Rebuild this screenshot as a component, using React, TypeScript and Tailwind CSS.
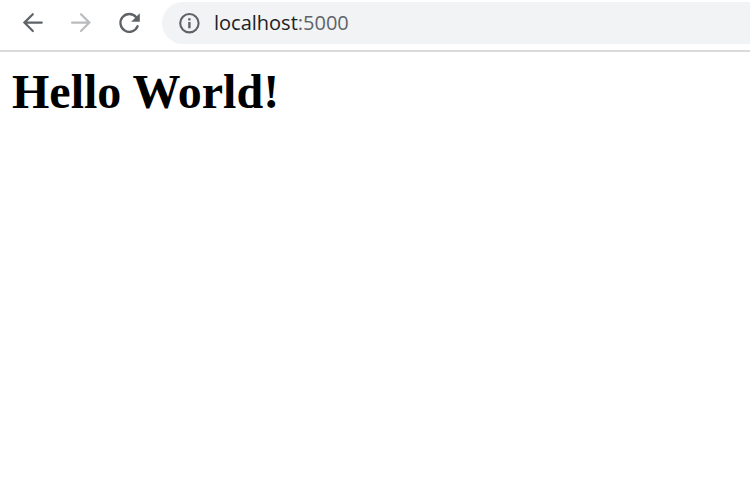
import React from "react";

const iconButton = "flex size-8 items-center justify-center rounded-full";

function BrowserToolbar() {
  return (
    <header className="flex h-[52px] items-start border-b-2 border-[#dadada] bg-white pl-4 pt-[2px]">
      <nav aria-label="Browser controls" className="flex h-[42px] shrink-0 items-center gap-4">
        <button type="button" aria-label="Back" className={iconButton}>
          <svg viewBox="0 0 32 32" className="size-8 fill-none stroke-[#5f6368]" strokeWidth="2.2" strokeLinecap="round" aria-hidden="true">
            <path d="M25.8 15.6H8.4M16.8 7.2L8.4 15.6l8.4 8.4" />
          </svg>
        </button>
        <button type="button" aria-label="Forward" disabled className={iconButton}>
          <svg viewBox="0 0 32 32" className="size-8 fill-none stroke-[#babcbe]" strokeWidth="2.2" strokeLinecap="round" aria-hidden="true">
            <path d="M8 15.6H25.4M17 7.2L25.4 15.6l-8.4 8.4" />
          </svg>
        </button>
        <button type="button" aria-label="Reload" className={iconButton}>
          <svg viewBox="0 0 32 32" className="size-8" aria-hidden="true">
            <path
              d="M24.2 10.2A8.9 8.9 0 1 0 25.6 19.2"
              fill="none"
              stroke="#5f6368"
              strokeWidth="2.3"
              strokeLinecap="round"
            />
            <path d="M27.8 6.2v8.6h-8.6z" fill="#5f6368" />
          </svg>
        </button>
      </nav>
      <div className="ml-[18px] flex h-[42px] min-w-0 flex-1 items-center gap-3 rounded-l-full bg-[#f1f3f4] pl-4">
        <button type="button" aria-label="View site information">
          <svg viewBox="0 0 24 24" className="size-6" aria-hidden="true">
            <circle cx="11.4" cy="12.2" r="9.2" fill="none" stroke="#5f6368" strokeWidth="2.1" />
            <path d="M10.2 7.2h2.4v2.4h-2.4zM10.2 11h2.4v6.2h-2.4z" fill="#5f6368" />
          </svg>
        </button>
        <a href="http://localhost:5000" className="font-['Open_Sans','Noto_Sans',sans-serif] text-xl leading-7 text-[#202124]">
          localhost<span className="text-[#5f6368]">:5000</span>
        </a>
      </div>
    </header>
  );
}

export default function App() {
  return (
    <div className="min-h-screen bg-white">
      <BrowserToolbar />
      <main className="px-3 pt-3">
        <h1 className="font-['Liberation_Serif',serif] text-5xl leading-[56px] font-bold text-black">
          Hello World!
        </h1>
      </main>
    </div>
  );
}
